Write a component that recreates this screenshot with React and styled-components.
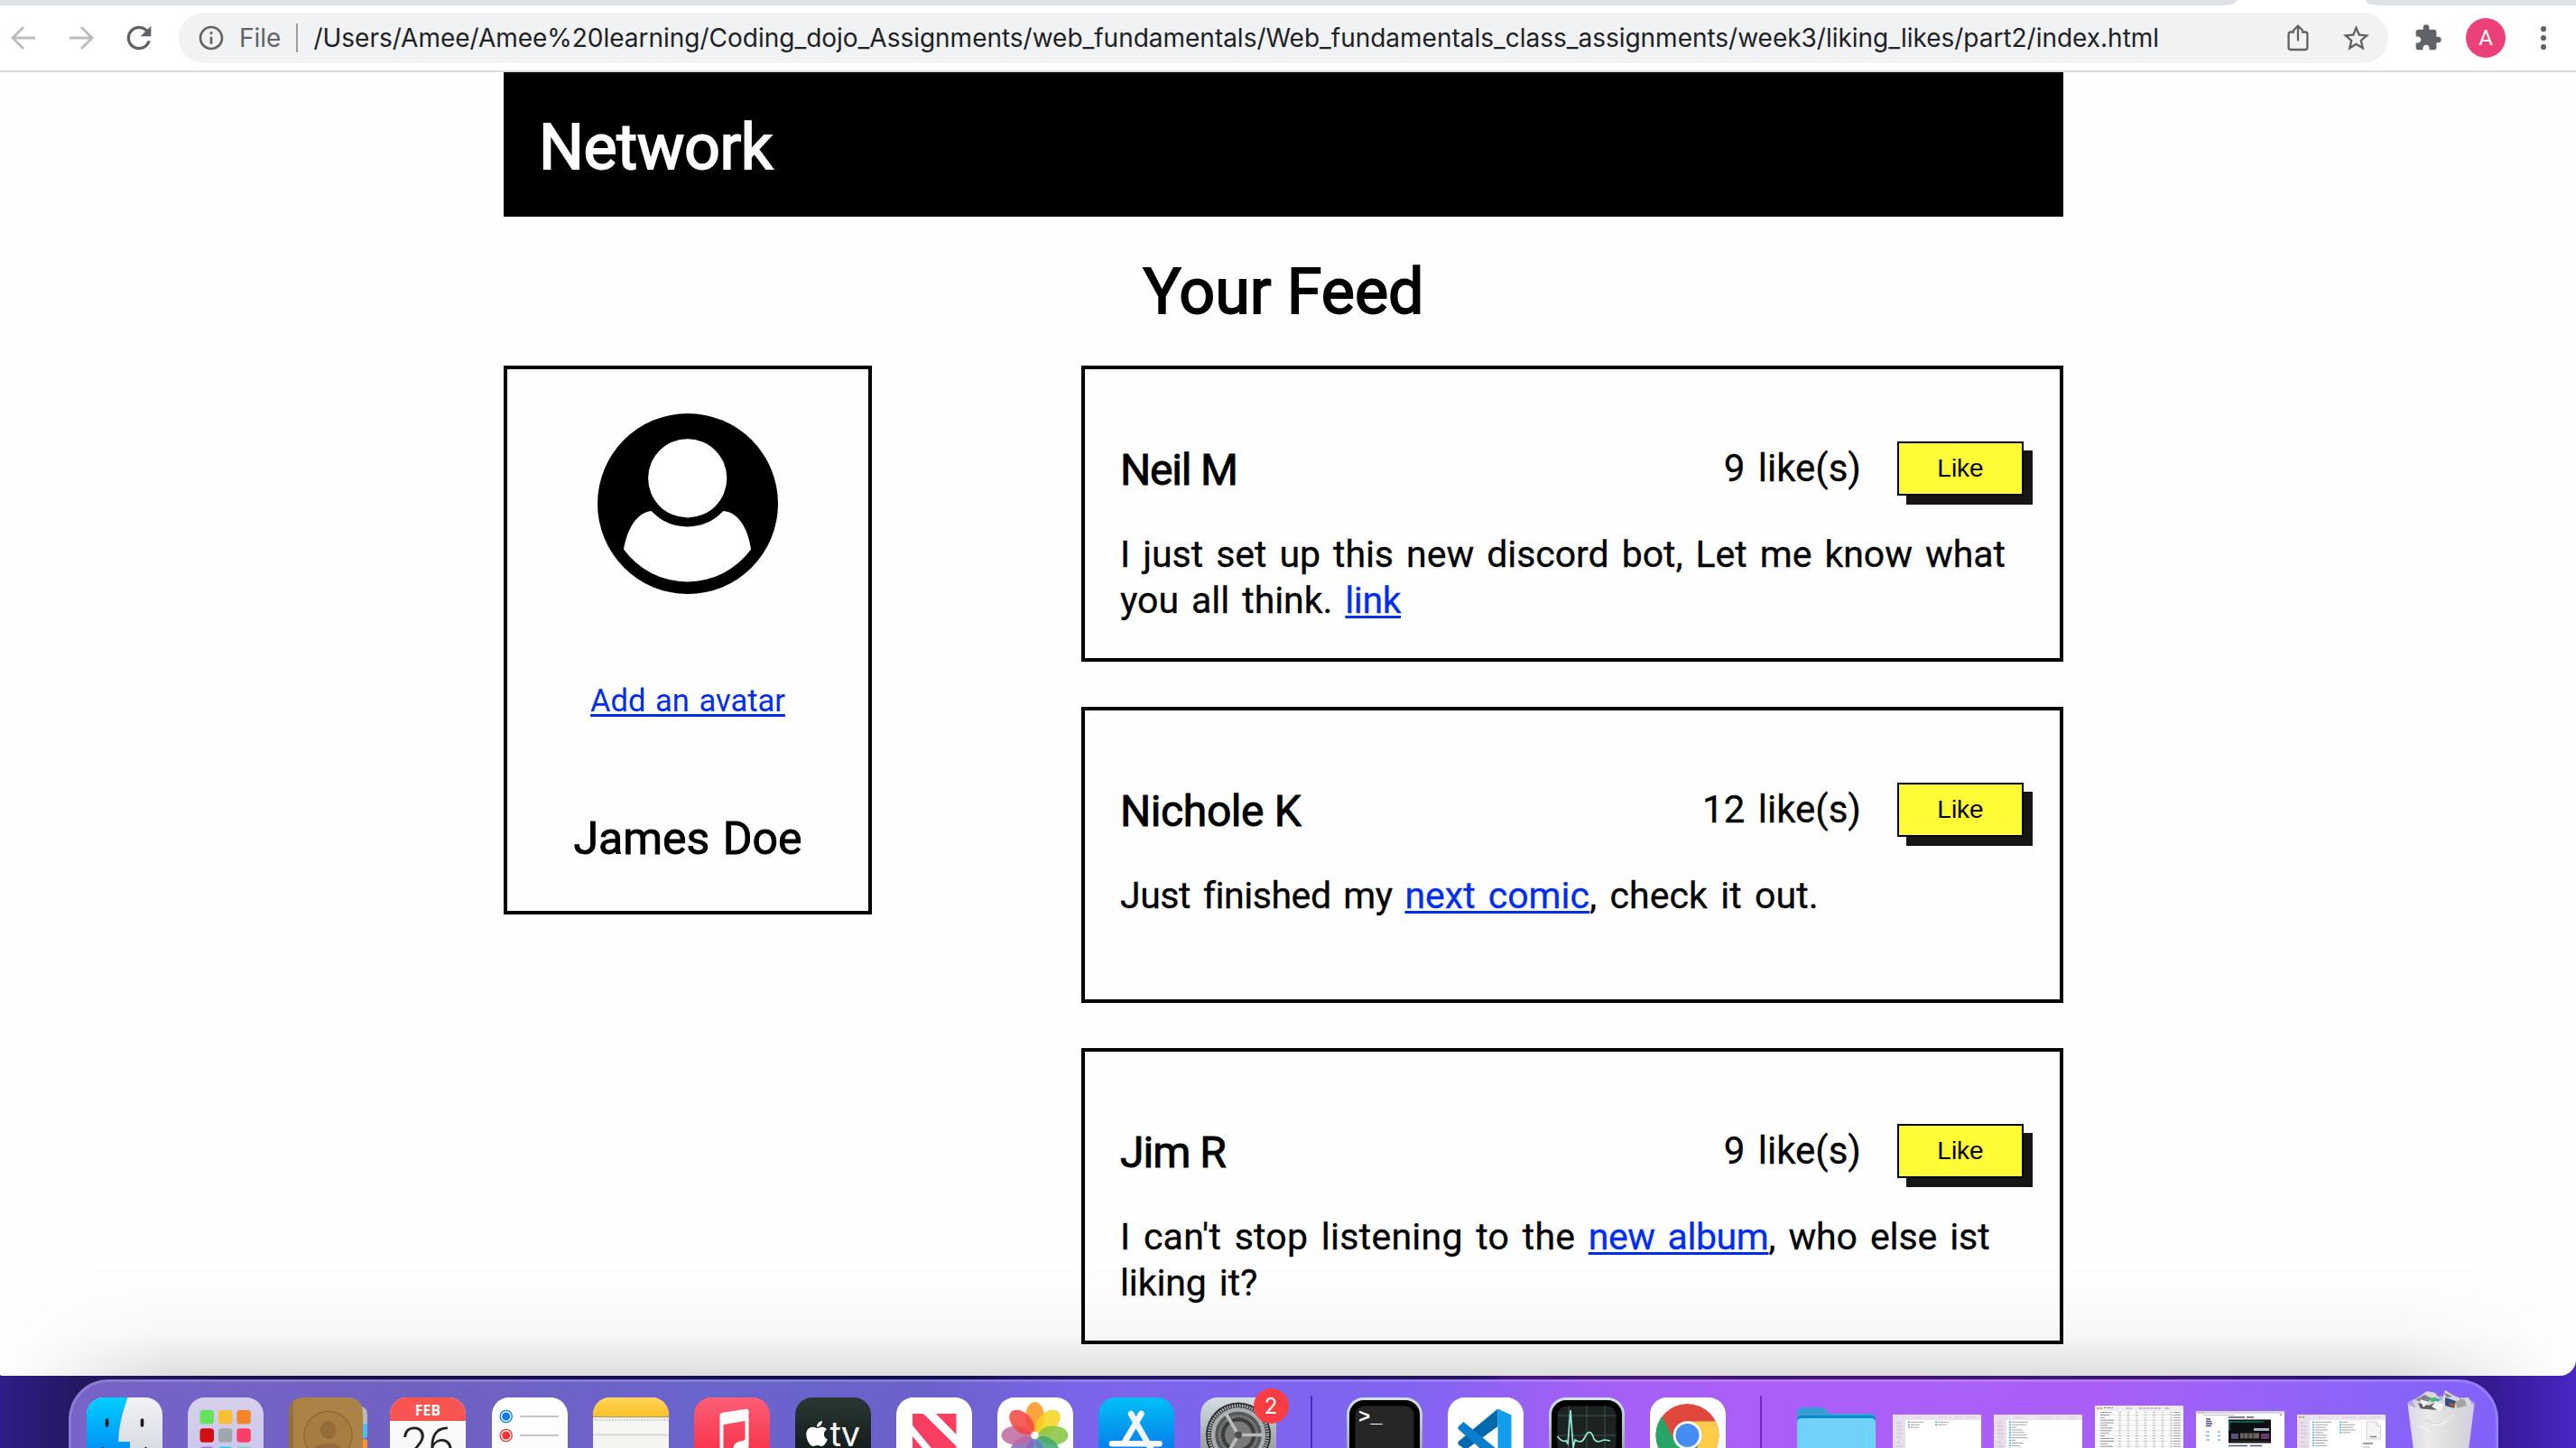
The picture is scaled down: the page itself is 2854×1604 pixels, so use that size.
import React from "react";
import styled, { createGlobalStyle } from "styled-components";
import { MdInfoOutline, MdRefresh, MdStarBorder, MdExtension } from "react-icons/md";
import { FaApple } from "react-icons/fa";

const GlobalStyle = createGlobalStyle`
  * { box-sizing: border-box; }
  html, body { margin: 0; padding: 0; overflow: hidden; }
  h1, h2, h3, p { margin: 0; font-weight: 400; }
`;

const Screen = styled.div`
  display: flex;
  flex-direction: column;
  width: 2854px;
  height: 1604px;
  overflow: hidden;
  font-family: Roboto, "Liberation Sans", sans-serif;
  color: #000;
  background: linear-gradient(90deg, #2e1e88 0, #251660 90px, #17114c 320px, #120f50 1080px, #22125f 1110px, #261361 1640px, #42157c 1670px, #401578 2350px, #2b1670 2600px, #351a92 2760px, #4826c4 2854px);
`;

const TabStrip = styled.div`
  display: flex;
  justify-content: space-between;
  height: 6px;
  flex: none;
  background: #fff;
`;

const InactiveTabs = styled.div`
  width: ${(p) => p.$width}px;
  height: 6px;
  background: #dee1e6;
  border-radius: ${(p) => (p.$side === "left" ? "0 0 14px 0 / 0 0 6px 0" : "0 0 0 14px / 0 0 0 6px")};
`;

const Toolbar = styled.div`
  display: flex;
  align-items: center;
  height: 74px;
  flex: none;
  padding: 0 14px 0 6px;
  background: #fff;
  border-bottom: 2px solid #dadcde;
`;

const NavButtons = styled.div`
  display: flex;
  gap: 24px;
  margin-right: 24px;
  color: #5f6368;
`;

const IconSlot = styled.span`
  display: flex;
  align-items: center;
  justify-content: center;
  width: ${(p) => p.$size || 40}px;
  height: ${(p) => p.$size || 40}px;
  color: ${(p) => (p.$muted ? "#babcbe" : "#5f6368")};
  svg { flex: none; }
`;

const AddressBar = styled.div`
  display: flex;
  align-items: center;
  flex: 1;
  height: 56px;
  padding: 0 16px 0 20px;
  border-radius: 28px;
  background: #f1f2f4;
  font-family: Inter, sans-serif;
  font-size: 28px;
  color: #5f6368;
`;

const Scheme = styled.span`
  margin-left: 15px;
`;

const Divider = styled.span`
  width: 2px;
  height: 32px;
  margin: 0 17px;
  background: #9b9ea3;
`;

const Url = styled.span`
  flex: 1;
  white-space: nowrap;
  letter-spacing: -0.015px;
  color: #202124;
`;

const AddressActions = styled.div`
  display: flex;
  gap: 24px;
`;

const ToolbarActions = styled.div`
  display: flex;
  gap: 20px;
  margin-left: 22px;
`;

const ProfileBadge = styled.span`
  width: 44px;
  height: 44px;
  border-radius: 50%;
  background: #ec407a;
  color: #fff;
  font-size: 24px;
  line-height: 44px;
  text-align: center;
`;

const Viewport = styled.main`
  position: relative;
  height: 1444px;
  flex: none;
  overflow: hidden;
  background: #fefefe;
  border-radius: 0 0 18px 2px;
`;

const DockShade = styled.div`
  position: absolute;
  left: 0;
  right: 0;
  bottom: 0;
  height: 130px;
  background: linear-gradient(180deg, rgba(0, 0, 0, 0) 0, rgba(0, 0, 0, 0.008) 35%, rgba(0, 0, 0, 0.03) 66%, rgba(0, 0, 0, 0.125) 100%);
  mask-image: linear-gradient(90deg, transparent 10px, #000 190px, #000 2650px, transparent 2840px);
`;

const Wrapper = styled.div`
  width: 1728px;
  margin-left: 558px;
`;

const Header = styled.header`
  display: flex;
  align-items: center;
  height: 160px;
  padding: 5px 39px 0;
  background: #000;
  color: #fff;
`;

const Title = styled.h1`
  font-size: 70px;
  line-height: 80px;
  letter-spacing: ${(p) => p.$tracking || 0}px;
  -webkit-text-stroke: 1.8px currentColor;
`;

const FeedHeading = styled.div`
  display: flex;
  align-items: center;
  justify-content: center;
  height: 165px;
`;

const Columns = styled.div`
  display: flex;
  align-items: flex-start;
  justify-content: space-between;
`;

const ProfileCard = styled.aside`
  display: flex;
  flex-direction: column;
  align-items: center;
  width: 408px;
  height: 608px;
  padding-top: 49px;
  border: 4px solid #000;
`;

const Link = styled.a`
  color: #002eeb;
  letter-spacing: ${(p) => p.$tracking || 0}px;
  text-decoration: underline;
  text-decoration-thickness: 3px;
  text-underline-offset: 3px;
`;

const AvatarLink = styled(Link)`
  margin-top: 93px;
  font-size: 34.5px;
  line-height: 50px;
  word-spacing: 2px;
`;

const ProfileName = styled.h2`
  margin-top: 98px;
  font-size: 50px;
  line-height: 60px;
  word-spacing: 2px;
  -webkit-text-stroke: 0.9px currentColor;
`;

const Feed = styled.section`
  display: flex;
  flex-direction: column;
  gap: 50px;
  width: 1088px;
`;

const Post = styled.article`
  height: 328px;
  padding: 80px 40px 0 39px;
  border: 4px solid #000;
`;

const PostHead = styled.div`
  display: flex;
  align-items: center;
  height: 60px;
`;

const Author = styled.h3`
  flex: 1;
  padding-top: 3px;
  font-size: 48px;
  line-height: 60px;
  letter-spacing: ${(p) => p.$tracking || 0}px;
  -webkit-text-stroke: 0.9px currentColor;
`;

const Likes = styled.span`
  margin-right: 40px;
  font-size: 42px;
  line-height: 60px;
  word-spacing: 4px;
  -webkit-text-stroke: 0.3px currentColor;
`;

const LikeButton = styled.button`
  width: 140px;
  height: 60px;
  padding: 0;
  border: 2px solid #000;
  background: #fffc37;
  box-shadow: 10px 10px 0 #171516;
  color: #000;
  font: 28px/56px "Liberation Sans", Arial, sans-serif;
`;

const Message = styled.p`
  width: 1008px;
  margin-top: 40px;
  font-size: 41px;
  line-height: 51px;
  word-spacing: 4px;
  -webkit-text-stroke: 0.3px currentColor;
`;

const Phrase = styled.span`
  letter-spacing: ${(p) => p.$tracking || 0}px;
`;

const Dock = styled.div`
  display: flex;
  align-items: flex-start;
  gap: 28.15px;
  width: 2692px;
  height: 90px;
  flex: none;
  margin: 4px 0 0 76px;
  padding: 17px 0 0 17px;
  border: 3px solid rgba(255, 255, 255, 0.16);
  border-radius: 44px 44px 0 0;
  background: linear-gradient(90deg, #7863c9 0, #7061c1 400px, #6a64cd 700px, #6b61cb 950px, #7c64ea 1130px, #8064f1 1480px, #a260f5 1680px, #ab5ff8 1850px, #a95ff7 2250px, #8b64f7 2540px, #8262f8 2692px) border-box;
`;

const AppTile = styled.span`
  position: relative;
  width: 84px;
  height: 56px;
  flex: none;
  svg { display: block; overflow: visible; }
`;

const Badge = styled.span`
  position: absolute;
  left: 59px;
  top: -10px;
  width: 39px;
  height: 39px;
  border-radius: 50%;
  background: #f93d43;
  color: #fff;
  font: 24px/39px Inter, sans-serif;
  text-align: center;
`;

const DockDivider = styled.span`
  width: 2px;
  height: 60px;
  margin: -2px 10px 0;
  flex: none;
  background: ${(p) => p.$color};
`;

const Windows = styled.div`
  display: flex;
  align-items: flex-start;
  gap: 14px;
  margin: 0 -4px 0 -10px;
`;

const DockItem = styled.span`
  width: ${(p) => p.$width}px;
  margin-top: ${(p) => p.$top}px;
  flex: none;
  svg { display: block; }
`;

const Arrow = ({ flip }) => (
  <svg width="28" height="28" viewBox="0 0 28 28" fill="none" stroke="currentColor" strokeWidth="2.8">
    <path d={flip ? "M1 14h25M14 2l12 12-12 12" : "M27 14H2M14 2 2 14l12 12"} />
  </svg>
);

const ShareIcon = () => (
  <svg width="24" height="30" viewBox="0 0 24 30" fill="none" stroke="currentColor" strokeWidth="2.3">
    <path d="M8 8.5H4A2.5 2.5 0 0 0 1.6 11v14.5A2.5 2.5 0 0 0 4 28h16a2.5 2.5 0 0 0 2.4-2.5V11A2.5 2.5 0 0 0 20 8.5h-4M12 18.500V2M6.500 7 12 1.600 17.500 7" />
  </svg>
);

const MoreIcon = () => (
  <svg width="8" height="28" viewBox="0 0 8 28" fill="currentColor">
    <circle cx="4" cy="4" r="3.1" /><circle cx="4" cy="14" r="3.1" /><circle cx="4" cy="24" r="3.1" />
  </svg>
);

const Avatar = () => (
  <svg width="200" height="200" viewBox="0 0 200 200">
    <circle cx="100" cy="100" r="100" fill="#000" />
    <circle cx="99.7" cy="71.8" r="43.6" fill="#fff" />
    <path d="M29 150.5C33 128 43 110 59.7 108A54 54 0 0 0 139.3 108C156 109 167 128 170 150.5A87 87 0 0 1 29 150.5Z" fill="#fff" />
  </svg>
);

const grad = (id, a, b) => (
  <linearGradient id={id} x1="0" y1="0" x2="0" y2="1"><stop offset="0" stopColor={a} /><stop offset="1" stopColor={b} /></linearGradient>
);

const Tile = ({ id, top, bottom, children }) => (
  <svg width="84" height="56" viewBox="0 0 84 56">
    <defs>
      {grad("bg-" + id, top, bottom)}
      <clipPath id={"clip-" + id}><rect width="84" height="84" rx="19" /></clipPath>
    </defs>
    <g clipPath={`url(#clip-${id})`}>
      <rect width="84" height="84" fill={`url(#bg-${id})`} />
      {children}
    </g>
  </svg>
);

const Finder = () => (
  <Tile id="finder" top="#f2f2f5" bottom="#ccd2db">
    <defs>{grad("finderBlue", "#00cfff", "#0076f0")}</defs>
    <path d="M0 0H45.5C39 18 35.5 34 35.2 49H48V84H0Z" fill="url(#finderBlue)" />
    <path d="M22.5 25v6M61.5 25v6" stroke="#1d1d1f" strokeWidth="3.6" strokeLinecap="round" />
    <path d="M16.5 55.5C34 70 50 70 66.5 55.5" stroke="#1d1d1f" strokeWidth="2.5" fill="none" />
  </Tile>
);

const padColors = [
  ["#66e35d", "#f9bf33", "#f4862a"],
  ["#d30d14", "#9fa7aa", "#fb3f66"],
  ["#b36bea", "#24c6ee", "#68dcc8"],
];
const Launchpad = () => (
  <Tile id="launch" top="#d6d0ec" bottom="#c9c4ec">
    {padColors.map((row, r) => row.map((c, i) => (
      <rect key={c} x={13.5 + i * 20.4} y={14 + r * 20.3} width="15.5" height="15.5" rx="3.6" fill={c} />
    )))}
  </Tile>
);

const Contacts = () => (
  <svg width="88" height="56" viewBox="0 0 88 56">
    <path d="M78 9q9 2 9 10v10h-9Z" fill="#bdbab3" />
    <path d="M78 29h9v13q0 3-3 3h-6Z" fill="#4fbdf0" />
    <path d="M78 46h6q3 0 3 3v7h-9Z" fill="#f79233" />
    <path d="M0 84V18Q0 0 18 0H64Q82 0 82 18V84Z" fill="#ac8347" />
    <path d="M0 84V18Q0 9 5 4V84Z" fill="#94703b" />
    <circle cx="43.5" cy="42" r="26.5" fill="#a77d41" stroke="#8f6a35" strokeWidth="1.5" />
    <ellipse cx="43.5" cy="36" rx="9" ry="10" fill="#936c39" />
    <path d="M26 60q3-9 17.500-9T61 60" fill="#936c39" />
  </svg>
);

const Calendar = () => (
  <Tile id="cal" top="#fff" bottom="#f4f4f4">
    <rect width="84" height="26" fill="#f9544f" />
    <text x="42" y="20" textAnchor="middle" fontFamily="Open Sans" fontWeight="700" fontSize="16" fill="#fff">FEB</text>
    <text x="42" y="71" textAnchor="middle" fontFamily="Roboto" fontWeight="300" fontSize="53" fill="#222">26</text>
  </Tile>
);

const Reminders = () => (
  <Tile id="rem" top="#fff" bottom="#fafafa">
    {["#0a7cf5", "#f7342f"].map((c, i) => (
      <g key={c}>
        <circle cx="15.7" cy={21 + i * 21} r="6.6" fill="none" stroke={c} strokeWidth="1.3" />
        <circle cx="15.7" cy={21 + i * 21} r="4.5" fill={c} />
        <path d={`M31 ${21 + i * 21}h43`} stroke="#b2b2b6" strokeWidth="1.6" />
      </g>
    ))}
  </Tile>
);

const Notes = () => (
  <Tile id="notes" top="#fafaf8" bottom="#f0efea">
    <defs>{grad("notesTop", "#ffd55a", "#febf27")}</defs>
    <rect width="84" height="21" fill="url(#notesTop)" />
    <rect y="21" width="84" height="1.2" fill="#a99c7b" />
    <path d="M2 25h82" stroke="#b5b3ae" strokeWidth="1.3" strokeDasharray="1.3 1.9" />
    <path d="M0 41.5h84" stroke="#d4d3cf" strokeWidth="1.5" />
  </Tile>
);

const Music = () => (
  <Tile id="music" top="#fb5f76" bottom="#fa233b">
    <path d="M28.5 19.5Q28.5 17.5 31 17L57.5 12.8Q60.5 12.3 60.5 15V54q0 6-8 8-9 0-9-6 0-6 8-7.5 5-.6 5-3V26L32.5 30V56H28.5Z" fill="#fff" />
  </Tile>
);

const AppleTv = () => (
  <Tile id="tv" top="#2a3834" bottom="#0a1010">
    <g transform="translate(8 24)"><FaApple size={32} color="#fff" /></g>
    <text x="38.5" y="54" fontFamily="Inter" fontSize="38" letterSpacing="-1" fill="#fff">tv</text>
  </Tile>
);

const News = () => (
  <Tile id="news" top="#fff" bottom="#fff">
    <path d="M18 18H30L66.5 54V84H62L18 31ZM44 18H66.5V41ZM18 43 52 84H18Z" fill="#f93e62" />
  </Tile>
);

const petals = ["#fb951d", "#f6d21f", "#86c440", "#3fa66f", "#5b83c4", "#8565b4", "#c0699f", "#f2453f"];
const Photos = () => (
  <Tile id="photos" top="#fff" bottom="#fcfcfc">
    {petals.map((c, i) => (
      <ellipse key={c} cx="41.5" cy="21.5" rx="10.5" ry="16.5" fill={c} opacity="0.85" transform={`rotate(${i * 45} 41.5 42)`} />
    ))}
    <circle cx="41.5" cy="42" r="1.6" fill="#fff" />
  </Tile>
);

const AppStore = () => (
  <Tile id="store" top="#02c0f6" bottom="#0860e6">
    <g stroke="#fff" strokeWidth="6.6" strokeLinecap="round">
      <path d="M47.5 18 28 51M15 51.3H67.5" />
      <path d="M36 18 60 60" stroke="#eef5fc" />
    </g>
  </Tile>
);

const Settings = () => (
  <Tile id="settings" top="#d3dfe6" bottom="#7d8082">
    <circle cx="42" cy="41.5" r="36" fill="#28292a" />
    <circle cx="42" cy="41.5" r="32.5" fill="none" stroke="#b5b9ba" strokeWidth="3.6" strokeDasharray="1.5 1.3" />
    <circle cx="42" cy="41.5" r="28" fill="#55585a" stroke="#a9adaf" strokeWidth="4.5" />
    <circle cx="42" cy="41.5" r="20.5" fill="#3b3d3e" stroke="#8e9293" strokeWidth="3" strokeDasharray="1.3 1.1" />
    <circle cx="42" cy="41.5" r="15" fill="#77797a" />
    <path d="M42 41.5H69M42 41.5 28 17.5M42 41.5 28 66" stroke="#b9bdbe" strokeWidth="3.6" />
    <circle cx="42" cy="41.5" r="4" fill="#4b4d4e" />
  </Tile>
);

const Terminal = () => (
  <Tile id="term" top="#d4e4ec" bottom="#868b8d">
    <rect x="3" y="3" width="78" height="90" rx="16" fill="#000" />
    <rect x="9.5" y="9.5" width="65" height="80" rx="10" fill="#262626" />
    <text x="13" y="27.5" fontFamily="Liberation Mono" fontWeight="700" fontSize="22" fill="#fff">&gt;_</text>
  </Tile>
);

const VsCode = () => (
  <Tile id="code" top="#fff" bottom="#fff">
    <path d="M55.5 12.5V32L20 58 11.5 52V49Z" fill="#0068ac" />
    <path d="M11.5 32.5 17.5 27 60 62H42L11.5 35Z" fill="#0b7fcd" />
    <path d="M55.5 12.5 70.5 19.5V70H55.5Z" fill="#119ced" />
  </Tile>
);

const Activity = () => (
  <Tile id="act" top="#d4e4ec" bottom="#868b8d">
    <rect x="3" y="3" width="78" height="90" rx="16" fill="#000" />
    <rect x="9.5" y="9.5" width="65" height="80" rx="10" fill="#1c2222" />
    <path d="M9.5 20H74.5M9.5 42H74.5M22 9.5V56M42 9.5V56M62 9.5V56" stroke="#3c544e" strokeWidth="1" />
    <path d="M9.5 43C13 48 16 49 19 48L21 51 24 14 27 56 29 47C34 50 37 50 40 44 43 37 47 36 50 46 54 52 58 47 62 47L68 48" fill="none" stroke="#93ead6" strokeWidth="1.7" />
  </Tile>
);

const Chrome = () => (
  <Tile id="chrome" top="#fff" bottom="#f6f6f6">
    <circle cx="41.5" cy="42" r="35" fill="#e0483e" />
    <path d="M13.5 21A35 35 0 0 0 41.5 77L55 50 28 50Z" fill="#26a566" />
    <path d="M41.5 26.5H72.8A35 35 0 0 1 41.5 77L55 50Z" fill="#ffcd4a" />
    <circle cx="41.5" cy="42" r="15.8" fill="#fff" />
    <circle cx="41.5" cy="42" r="13" fill="#458df5" />
  </Tile>
);

const Folder = () => (
  <svg width="88" height="45" viewBox="0 0 88 45">
    <path d="M0 45V6Q0 0 6 0H26Q30 0 32.5 3.5 35 7 39 7H82Q87 7 87 12V45Z" fill="#36a0d4" />
    <path d="M0 45V14Q0 9 5 9H82Q87 9 87 14V45Z" fill="#078bc9" />
    <path d="M0 45V17Q0 12 5 12H82Q87 12 87 17V45Z" fill="#70d1f9" />
  </svg>
);

const lights = ["#f45f57", "#f6bd3b", "#38c74d"];
const FinderWindow = ({ rows, third, lit }) => (
  <svg width="98" height="42" viewBox="0 0 98 42">
    <rect width="98" height="42" rx="1.5" fill="#fff" />
    <rect width="98" height="6" rx="1.5" fill="#eae3ec" />
    <rect width="14" height="42" fill="#e8dfea" />
    {lit && lights.map((c, i) => <circle key={c} cx={3 + i * 2} cy="3" r="0.9" fill={c} />)}
    <path d="M24 3h8M50 3h16M70 3h6M82 3h10" stroke="#c9c3cc" strokeWidth="1" strokeDasharray="2.5 1.5" />
    <path d="M3 9h6M4 13h7M4 17h6M4 21h7M4 25h6M3 31h5M4 35h7M4 39h6" stroke="#cabfce" strokeWidth="1.2" />
    {rows.map((w, i) => (
      <g key={i}>
        <rect x="17" y={7.5 + i * 2.9} width="2" height="1.5" fill="#3fb1e6" />
        <path d={`M20 ${8.3 + i * 2.9}h${w}`} stroke="#9a9a9d" strokeWidth="0.9" />
      </g>
    ))}
    {third && third.map((w, i) => (
      <g key={i}>
        <rect x="47" y={7.5 + i * 2.9} width="2" height="1.5" fill="#3fb1e6" />
        <path d={`M50 ${8.3 + i * 2.9}h${w}`} stroke="#9a9a9d" strokeWidth="0.9" />
      </g>
    ))}
  </svg>
);

const FilePreview = () => (
  <svg width="98" height="42" viewBox="0 0 98 42">
    <FinderWindow lit rows={[18, 14, 12, 14, 9, 13, 12, 14, 11, 13]} third={[6, 14, 12, 15, 9]} />
    <path d="M71.5 6V42" stroke="#e2e2e2" strokeWidth="0.6" />
    <path d="M77 8H88L92.5 13V27H77Z" fill="#f4f4f4" stroke="#c9c9c9" strokeWidth="0.8" />
    <path d="M88 8V13H92.5" fill="none" stroke="#c9c9c9" strokeWidth="0.8" />
    <path d="M81 24.5h7" stroke="#777" strokeWidth="1.3" />
    <path d="M73 32h11" stroke="#555" strokeWidth="1.2" />
    <path d="M73 36h8" stroke="#aaa" strokeWidth="0.9" />
    <path d="M91 37.5h5" stroke="#3c90f0" strokeWidth="1" />
  </svg>
);

const TableWindow = () => (
  <svg width="98" height="52" viewBox="0 0 98 52">
    <rect width="98" height="52" rx="1.5" fill="#fff" />
    <rect width="98" height="6" rx="1.5" fill="#f3ebf3" />
    {lights.map((c, i) => <circle key={c} cx={3 + i * 2} cy="3" r="0.9" fill={c} />)}
    <path d="M10 2.5h10M35 3h6M49 3h25M78 3h5" stroke="#8b858d" strokeWidth="1" strokeDasharray="3 1.2" />
    {Array.from({ length: 16 }, (_, i) => (
      <g key={i}>
        {i % 2 === 1 && <rect y={6 + i * 2.9} width="98" height="2.9" fill="#f2f3f4" />}
        <path d={`M6 ${7.5 + i * 2.9}h${[12, 10, 5, 15, 15, 8, 14][i % 7]}`} stroke="#8c8c8f" strokeWidth="0.9" />
        <path d={`M26 ${7.5 + i * 2.9}h62`} stroke="#a6a6a9" strokeWidth="0.8" strokeDasharray="3 6.5" />
        <path d={`M87 ${7.5 + i * 2.9}h8`} stroke="#97979a" strokeWidth="0.9" />
      </g>
    ))}
  </svg>
);

const BrowserWindow = () => (
  <svg width="98" height="46" viewBox="0 0 98 46">
    <rect width="98" height="46" rx="1.5" fill="#fff" />
    <rect width="98" height="3" rx="1.5" fill="#d6d5e6" />
    {lights.map((c, i) => <circle key={c} cx={3 + i * 2} cy="1.7" r="0.7" fill={c} />)}
    <path d="M8 4.5h35" stroke="#b9b9c0" strokeWidth="0.9" />
    <circle cx="94" cy="4.5" r="0.9" fill="#ec407a" />
    <path d="M11 9h5M11 11.5h6M11 14h7M11 16.5h6" stroke="#4a5278" strokeWidth="1.3" />
    <path d="M36 7h18M56 7h8M36 38.5h21M60 38.5h13" stroke="#4b587e" strokeWidth="1.4" />
    <path d="M11 23h4M24 23h3M11 27.5h4M24 27.5h3M11 32h4M24 32h3" stroke="#4c8ee8" strokeWidth="1" />
    <rect x="36" y="9.5" width="47" height="26" fill="#0b0f12" />
    <path d="M37 11V22M37 12H75" stroke="#17b99a" strokeWidth="0.9" />
    <rect x="64" y="19" width="17" height="3" fill="#aeb4b8" />
    <rect x="39" y="25" width="8" height="6" fill="#5a5078" />
    <rect x="49" y="24.5" width="21" height="6" fill="#6f655f" />
    <path d="M53 24v7M58 24v7M63 24v7" stroke="#222" strokeWidth="1" />
    <rect x="72" y="25" width="9" height="6" fill="#6a3a6e" />
    <path d="M38 33.5h43" stroke="#5d3a3f" strokeWidth="0.7" />
  </svg>
);

const Trash = () => (
  <svg width="75" height="66" viewBox="0 0 75 66">
    <defs>
      <linearGradient id="bin" x1="0" x2="1"><stop offset="0" stopColor="#d9d7e6" /><stop offset="0.3" stopColor="#ebe9ea" /><stop offset="0.7" stopColor="#dcdad9" /><stop offset="1" stopColor="#d2cfe2" /></linearGradient>
    </defs>
    <ellipse cx="37.5" cy="15" rx="37" ry="8.5" fill="#b7a6ec" />
    <path d="M6 12 22 1 31 3 38 12 42 0 50 5 58 9 68 8 72 17 60 24H12Z" fill="#d8d8d8" />
    <path d="M9 11 19 5 27 9 22 14ZM40 2 44 8 50 7M58 9 65 13 60 18Z" fill="#808285" />
    <path d="M12 14 24 17 34 12 32 23H16Z" fill="#5e6065" />
    <path d="M14 10 24 13 18 19ZM32 12 41 16 37 24 27 18Z" fill="#f4f4f4" />
    <path d="M24 9 31 8 36 11 27 13Z" fill="#3dbd6c" /><path d="M31 9 37 10 34 13Z" fill="#2aa7dd" />
    <path d="M42 8 54 12 52 20 42 17Z" fill="#31508a" /><path d="M45 14 53 15 52 20Z" fill="#b4562c" /><path d="M54 12 63 10 66 17 55 20Z" fill="#a3a3a5" />
    <path d="M0.5 15C8 24 66 24 74.5 15L68 66H7Z" fill="url(#bin)" />
    <path d="M14 28Q28 44 52 26Q46 38 30 40ZM10 38Q22 40 30 50" fill="#f7f6f6" opacity="0.7" />
    <path d="M20 33Q32 42 48 30" stroke="#c9c7c8" strokeWidth="0.8" fill="none" />
  </svg>
);

const mainApps = [Finder, Launchpad, Contacts, Calendar, Reminders, Notes, Music, AppleTv, News, Photos, AppStore, Settings];
const devApps = [Terminal, VsCode, Activity, Chrome];

const posts = [
  {
    author: "Neil M", nameTracking: -1.2, likes: 9,
    body: <><Phrase $tracking={-0.05}>I just set up this new discord bot, Let me know what you all think. </Phrase><Link $tracking={-0.4}>link</Link></>,
  },
  {
    author: "Nichole K", nameTracking: -0.4, likes: 12,
    body: <><Phrase $tracking={-0.45}>Just finished my </Phrase><Link>next comic</Link><Phrase $tracking={0.1}>, check it out.</Phrase></>,
  },
  {
    author: "Jim R", nameTracking: -1, likes: 9,
    body: <><Phrase $tracking={0.28}>I can't stop listening to the </Phrase><Link $tracking={-0.4}>new album</Link><Phrase $tracking={-0.1}>, who else ist liking it?</Phrase></>,
  },
];

export default function App() {
  return (
    <Screen>
      <GlobalStyle />
      <TabStrip>
        <InactiveTabs $side="left" $width={2478} />
        <InactiveTabs $side="right" $width={233} />
      </TabStrip>
      <Toolbar>
        <NavButtons>
          <IconSlot $muted><Arrow /></IconSlot>
          <IconSlot $muted><Arrow flip /></IconSlot>
          <IconSlot><MdRefresh size={40} /></IconSlot>
        </NavButtons>
        <AddressBar>
          <MdInfoOutline size={32} />
          <Scheme>File</Scheme>
          <Divider />
          <Url>/Users/Amee/Amee%20learning/Coding_dojo_Assignments/web_fundamentals/Web_fundamentals_class_assignments/week3/liking_likes/part2/index.html</Url>
          <AddressActions>
            <IconSlot><ShareIcon /></IconSlot>
            <IconSlot><MdStarBorder size={35} /></IconSlot>
          </AddressActions>
        </AddressBar>
        <ToolbarActions>
          <IconSlot $size={44}><MdExtension size={32} /></IconSlot>
          <ProfileBadge>A</ProfileBadge>
          <IconSlot $size={44}><MoreIcon /></IconSlot>
        </ToolbarActions>
      </Toolbar>
      <Viewport>
        <Wrapper>
          <Header><Title $tracking={-0.4}>Network</Title></Header>
          <FeedHeading><Title>Your Feed</Title></FeedHeading>
          <Columns>
            <ProfileCard>
              <Avatar />
              <AvatarLink>Add an avatar</AvatarLink>
              <ProfileName>James Doe</ProfileName>
            </ProfileCard>
            <Feed>
              {posts.map((post) => (
                <Post key={post.author}>
                  <PostHead>
                    <Author $tracking={post.nameTracking}>{post.author}</Author>
                    <Likes>{post.likes} like(s)</Likes>
                    <LikeButton>Like</LikeButton>
                  </PostHead>
                  <Message>{post.body}</Message>
                </Post>
              ))}
            </Feed>
          </Columns>
        </Wrapper>
        <DockShade />
      </Viewport>
      <Dock>
        {mainApps.map((Icon, i) => (
          <AppTile key={i}>
            <Icon />
            {Icon === Settings && <Badge>2</Badge>}
          </AppTile>
        ))}
        <DockDivider $color="#4a2cc0" />
        {devApps.map((Icon, i) => <AppTile key={i}><Icon /></AppTile>)}
        <DockDivider $color="#7429bd" />
        <DockItem $width={88} $top={11}><Folder /></DockItem>
        <Windows>
          <DockItem $width={98} $top={19}><FinderWindow rows={[14, 10, 9]} third={[12, 10]} /></DockItem>
          <DockItem $width={98} $top={19}><FinderWindow rows={[18, 16, 5, 12, 14, 16, 17, 4, 13, 9, 11, 12]} /></DockItem>
          <DockItem $width={98} $top={9}><TableWindow /></DockItem>
          <DockItem $width={98} $top={15}><BrowserWindow /></DockItem>
          <DockItem $width={98} $top={19}><FilePreview /></DockItem>
        </Windows>
        <DockItem $width={75} $top={-8}><Trash /></DockItem>
      </Dock>
    </Screen>
  );
}
